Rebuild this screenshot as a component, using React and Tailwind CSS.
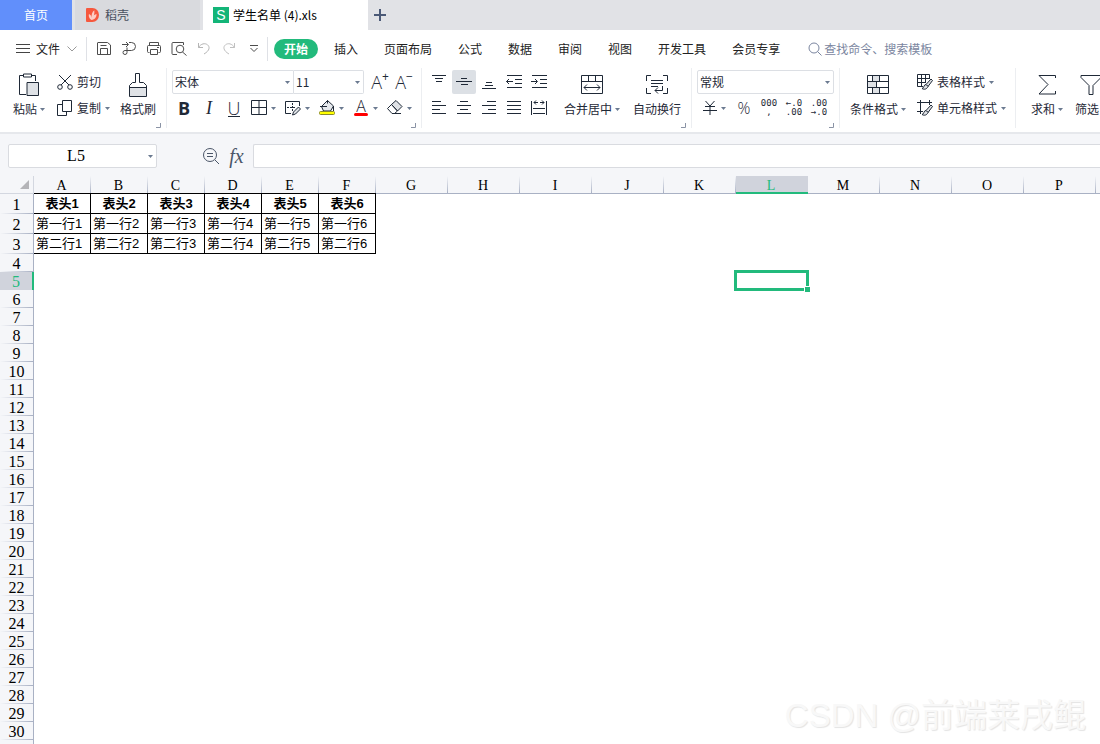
import React, { useState } from "react";
import clsx from "clsx";
import { twMerge } from "tailwind-merge";

/* ── Sheet data ── */
const COLUMNS = "ABCDEFGHIJKLMNOPQ".split("");
const ROW_COUNT = 31;
const DATA_COLS = 6;

const sheet = [
  ["表头1", "表头2", "表头3", "表头4", "表头5", "表头6"],
  ["第一行1", "第一行2", "第一行3", "第一行4", "第一行5", "第一行6"],
  ["第二行1", "第二行2", "第二行3", "第二行4", "第二行5", "第二行6"],
];

const menus = ["插入", "页面布局", "公式", "数据", "审阅", "视图", "开发工具", "会员专享"];

/* ── Shared bits ── */
const Icon = ({ w = 16, h = 16, className, children }) => (
  <svg
    width={w}
    height={h}
    viewBox={`0 0 ${w} ${h}`}
    fill="none"
    stroke="currentColor"
    strokeWidth="1"
    className={clsx("shrink-0", className)}
    aria-hidden="true"
  >
    {children}
  </svg>
);

const Caret = ({ className }) => (
  <svg width="5" height="3" viewBox="0 0 5 3" className={clsx("shrink-0 text-[#6b7a90]", className)} aria-hidden="true">
    <path d="M0 0h5L2.5 3z" fill="currentColor" />
  </svg>
);

const ToolButton = ({ label, caret, active, className, children }) => (
  <button
    type="button"
    aria-label={label}
    className={twMerge(
      "flex h-6 shrink-0 items-center rounded-xs",
      caret ? "w-[34px] gap-1 pl-px" : "w-6 justify-center",
      active && "bg-[#dce0e5]",
      className
    )}
  >
    {children}
    {caret && <Caret />}
  </button>
);

/* icon above, label below */
const BigButton = ({ label, caret, className, children }) => (
  <button type="button" className={clsx("flex shrink-0 flex-col items-center self-start", className)}>
    <span className="flex h-[30px] items-center">{children}</span>
    <span className="flex h-[18px] items-center gap-[3px] whitespace-nowrap">
      {label}
      {caret && <Caret />}
    </span>
  </button>
);

const TextButton = ({ label, caret, children }) => (
  <button type="button" className="flex h-6 items-center gap-1 whitespace-nowrap">
    {children}
    {label}
    {caret && <Caret />}
  </button>
);

const Select = ({ label, value, className }) => (
  <div className={clsx("relative h-6 shrink-0", className)}>
    <select aria-label={label} className="h-full w-full appearance-none bg-transparent pl-0.5 outline-none">
      <option>{value}</option>
    </select>
    <Caret className="pointer-events-none absolute right-[3px] top-[10px]" />
  </div>
);

const Group = ({ launcher, className, children }) => (
  <div className={clsx("relative flex h-[60px] shrink-0 border-r border-[#eceef1]", className)}>
    {children}
    {launcher && (
      <Icon w={5} h={5} className="absolute bottom-0 right-[5px] text-[#8a93a5]">
        <path d="M4.5 0v4.500H0" />
      </Icon>
    )}
  </div>
);

const Brush = () => (
  <>
    <path d="M9 10.500l5-5.500 1.500 1.500-4.500 6z" fill="#dfe2e6" />
    <path d="M9 10.500c-2.500 0-1.500 3.500-4 4 2.500 1.500 5 .5 6-2z" fill="#dfe2e6" />
  </>
);

/* ── Top bars ── */
const TabBar = () => (
  <nav className="flex h-[30px] shrink-0 bg-[#e1e2e6]">
    <button type="button" className="w-[72px] bg-[#618ffb] text-white">首页</button>
    <button type="button" className="ml-[3px] flex w-[125px] items-center gap-[5px] bg-[#d9dade] pl-[11px] text-[#4a5160]">
      <svg width="14" height="14" viewBox="0 0 14 14" aria-hidden="true">
        <path d="M1 0h5.500a6.500 7 0 0 1 0 14H1a1 1 0 0 1-1-1V1a1 1 0 0 1 1-1z" fill="#f6583e" />
        <path d="M5.500 12C2.500 10 2.600 7.500 3 6c1.600.8 2.500 2.200 2.700 4C5.200 7 6 4 8.300 2.200c.3 3-.2 5-1.300 7 .5-1.700 1.700-2.900 3.500-3.200C10.700 9 9 11.500 5.500 12z" fill="#fff" fillOpacity=".7" />
      </svg>
      稻壳
    </button>
    <button type="button" className="ml-[3px] flex w-[165px] items-center gap-1 bg-white pl-[10px] text-black">
      <span className="flex size-4 items-center justify-center bg-[#13b578] font-['Liberation_Sans'] text-sm text-white">S</span>
      学生名单 (4).xls
    </button>
    <button type="button" aria-label="新建标签" className="flex w-6 items-center justify-center text-[#4a5876]">
      <Icon w={12} h={12}>
        <path d="M6 0v12M0 6h12" strokeWidth="2" />
      </Icon>
    </button>
  </nav>
);

const MenuBar = () => (
  <div className="flex h-[38px] shrink-0 items-center whitespace-nowrap">
    <button type="button" className="ml-4 flex items-center gap-[6px]">
      <Icon w={14} h={10} className="text-[#444]">
        <path d="M0 .5h14M0 4.500h14M0 8.500h14" />
      </Icon>
      文件
      <Icon w={12} h={6} className="text-[#999]">
        <path d="M1.500.5L6 5l4.500-4.500" />
      </Icon>
    </button>
    <div className="ml-2 h-6 w-px bg-[#dfe1e6]" />
    <div className="ml-[5px] flex gap-px text-[#4d4d4d]">
      <ToolButton label="保存">
        <Icon>
          <path d="M2 1.500h9.500L14.500 4v9.500h-13v-12M4.500 13.500v-6h7v6M4.500 4.500h6" />
        </Icon>
      </ToolButton>
      <ToolButton label="输出">
        <Icon>
          <path d="M1 3.500h6M5 1l2.500 2.500L5 6M8 1.500h2.500a4 4 0 0 1 0 8H4a2 2 0 1 0 2 2V6.500" />
        </Icon>
      </ToolButton>
      <ToolButton label="打印">
        <Icon>
          <path d="M3.500 4.500v-3h9v3M3.500 11.500h-1a1 1 0 0 1-1-1v-5a1 1 0 0 1 1-1h11a1 1 0 0 1 1 1v5a1 1 0 0 1-1 1h-1M4.500 8.500h7v5h-7zM11 6.500h2" />
        </Icon>
      </ToolButton>
      <ToolButton label="打印预览">
        <Icon>
          <path d="M6 13.500H2a1 1 0 0 1-1-1v-10a1 1 0 0 1 1-1h10.500V4M11.500 11l4 3.500" />
          <circle cx="9" cy="8" r="3.800" />
        </Icon>
      </ToolButton>
      <ToolButton label="撤销" className="text-[#b5b5b5]">
        <Icon>
          <path d="M2.500 2v4.500H7M2.500 6.500C5 2.500 9 1.800 11.500 3.800S14 9.500 8 13" />
        </Icon>
      </ToolButton>
      <ToolButton label="恢复" className="text-[#c0c0c0]">
        <Icon>
          <path d="M13.500 2v4.500H9M13.500 6.500C11 2.500 7 1.800 4.500 3.800S2 9.500 8 13" />
        </Icon>
      </ToolButton>
      <ToolButton label="更多">
        <Icon w={8} h={8}>
          <path d="M0 .5h8M.5 3L4 6.500 7.500 3" />
        </Icon>
      </ToolButton>
    </div>
    <div className="ml-px h-6 w-px bg-[#dfe1e6]" />
    <button type="button" className="ml-[6px] h-5 w-11 rounded-full bg-[#22ba7c] font-bold text-white">开始</button>
    <div className="ml-4 flex gap-[26px]">
      {menus.map((m) => (
        <button key={m} type="button">{m}</button>
      ))}
    </div>
    <label className="ml-7 flex items-center gap-[2px] text-[#7b86a0]">
      <Icon w={14} h={14}>
        <circle cx="6" cy="6" r="5" />
        <path d="M9.500 9.500l4 4" />
      </Icon>
      <input type="search" placeholder="查找命令、搜索模板" className="w-32 bg-transparent outline-none placeholder:text-[#7b86a0]" />
    </label>
  </div>
);

const Ribbon = () => (
  <div className="flex h-16 shrink-0 overflow-hidden text-[#1f2937]">
    {/* clipboard */}
    <Group launcher className="w-[167px] pl-[13px] pt-0.5">
      <BigButton label="粘贴" caret>
        <Icon w={22} h={24}>
          <path d="M6 2.500H1.500v19H8M13 2.500h4.500V8M5.500 1h8v3h-8z" />
          <path d="M9 9.500h11.500v13H9z" fill="#dfe2e6" />
        </Icon>
      </BigButton>
      <div className="ml-3 flex flex-col gap-0.5">
        <TextButton label="剪切">
          <Icon w={16} h={16}>
            <path d="M2 1l10 10M14 1L4 11" />
            <circle cx="3" cy="13" r="2.300" />
            <circle cx="13" cy="13" r="2.300" />
          </Icon>
        </TextButton>
        <TextButton label="复制" caret>
          <Icon w={16} h={16}>
            <path d="M5.500.5h9v11h-9zM5.500 4.500h-5v11h9v-4" />
          </Icon>
        </TextButton>
      </div>
      <BigButton label="格式刷" className="ml-[10px]">
        <Icon w={18} h={26}>
          <path d="M1 16h16v8.500H1z" fill="#dfe2e6" stroke="none" />
          <path d="M6.500 1.500h4v9h4l3 3v11H.5v-11l3-3h3zM.5 15.500h17" />
        </Icon>
      </BigButton>
    </Group>

    {/* font */}
    <Group launcher className="w-[255px] flex-col gap-0.5 pl-[5px] pt-0.5">
      <div className="flex">
        <Select label="字体" value="宋体" className="w-[122px] rounded-l-xs border border-[#dcdfe4]" />
        <Select label="字号" value="11" className="w-[70px] rounded-r-xs border border-l-0 border-[#dcdfe4]" />
        <div className="ml-1 flex font-['Open_Sans']">
          <ToolButton label="增大字号">
            <span className="text-lg font-light leading-6">A</span>
            <span className="self-start text-xs leading-[14px]">+</span>
          </ToolButton>
          <ToolButton label="减小字号">
            <span className="text-lg font-light leading-6">A</span>
            <span className="self-start text-xs leading-[14px]">−</span>
          </ToolButton>
        </div>
      </div>
      <div className="flex gap-px">
        <ToolButton label="加粗">
          <span className="font-['Open_Sans'] text-lg font-bold leading-6">B</span>
        </ToolButton>
        <ToolButton label="倾斜">
          <span className="font-['Liberation_Serif'] text-lg italic leading-6">I</span>
        </ToolButton>
        <ToolButton label="下划线">
          <span className="h-[17px] border-b border-current font-['Open_Sans'] text-lg font-light leading-4">U</span>
        </ToolButton>
        <div className="ml-[3px] flex">
          <ToolButton label="边框" caret>
            <Icon>
              <path d="M.5.5h15v14H.5zM8 .5v14M.5 7.500h15" />
            </Icon>
          </ToolButton>
          <ToolButton label="绘制边框" caret>
            <Icon>
              <path d="M6 13.500H.5v-12h14V6" />
              <path d="M7.500 3v9M2 7.500h9" strokeDasharray="2 1" />
              <path d="M7.500 15l1-3 5-5 2 2-5 5z" fill="#dfe2e6" />
            </Icon>
          </ToolButton>
          <ToolButton label="填充颜色" caret>
            <Icon>
              <path d="M2.500 6.500l6-6 6 5.500-3 5h-7z" fill="#e6e9ed" />
              <path d="M1 6.500h7M8.500.5v3M14.500 6v5" />
              <rect x=".5" y="11.500" width="15" height="3" rx="1" fill="#ff0" stroke="#8a8a2a" />
            </Icon>
          </ToolButton>
          <ToolButton label="字体颜色" caret>
            <span className="flex w-4 flex-col items-center">
              <span className="h-[13px] font-['Open_Sans'] text-base font-light leading-3">A</span>
              <span className="h-[3px] w-[14px] rounded-full bg-[#f00]" />
            </span>
          </ToolButton>
          <ToolButton label="清除" caret>
            <Icon>
              <path d="M4.500 4.500L9 .5l6 6-4.500 4.500z" fill="#dfe2e6" />
              <path d="M4.500 4.500L.5 8.500l4.500 5h2.500l3-2.500zM5 13.500h9" />
            </Icon>
          </ToolButton>
        </div>
      </div>
    </Group>

    {/* alignment */}
    <Group launcher className="w-[270px] pl-[5px] pt-0.5">
      <div className="grid grid-cols-5 content-start gap-x-px gap-y-0.5">
        <ToolButton label="顶端对齐">
          <Icon className="-scale-y-100">
            <path d="M1 14.500h14M4 11.500h8M5 8.500h6" />
          </Icon>
        </ToolButton>
        <ToolButton label="垂直居中" active>
          <Icon>
            <path d="M5 4.500h6M0 7.500h16M5 10.500h7" />
          </Icon>
        </ToolButton>
        <ToolButton label="底端对齐">
          <Icon>
            <path d="M1 14.500h14M4 11.500h8M5 8.500h6" />
          </Icon>
        </ToolButton>
        <ToolButton label="减少缩进">
          <Icon>
            <path d="M1 1.500h15M9 5.500h7M9 9.500h7M1 13.500h15M.5 7.500H7M3 5L.5 7.500 3 10" />
          </Icon>
        </ToolButton>
        <ToolButton label="增加缩进">
          <Icon>
            <path d="M1 1.500h15M9 5.500h7M9 9.500h7M1 13.500h15M0 7.500h6M4 5l2.500 2.500L4 10" />
          </Icon>
        </ToolButton>
        <ToolButton label="左对齐">
          <Icon>
            <path d="M1 1.500h9M1 5.500h14M1 9.500h8M1 13.500h14" />
          </Icon>
        </ToolButton>
        <ToolButton label="水平居中">
          <Icon>
            <path d="M4 1.500h8M1 5.500h14M4 9.500h8M1 13.500h14" />
          </Icon>
        </ToolButton>
        <ToolButton label="右对齐">
          <Icon>
            <path d="M6 1.500h9M1 5.500h14M7 9.500h8M1 13.500h14" />
          </Icon>
        </ToolButton>
        <ToolButton label="两端对齐">
          <Icon>
            <path d="M1 1.500h14M1 5.500h14M1 9.500h14M1 13.500h14" />
          </Icon>
        </ToolButton>
        <ToolButton label="分散对齐">
          <Icon>
            <path d="M.5 1v14M15.500 1v14M3 2.500h4M5 .5L3 2.500l2 2M9 2.500h4M11 .5l2 2-2 2M2 8.500h12M2 13.500h12" />
          </Icon>
        </ToolButton>
      </div>
      <BigButton label="合并居中" caret className="ml-[13px]">
        <Icon w={22} h={20}>
          <path d="M.5.5h21v18H.5zM.5 6.500h21M7.500.5v6M14.500.5v6M3 12.500h16M6 9.500l-3 3 3 3M16 9.500l3 3-3 3" />
        </Icon>
      </BigButton>
      <BigButton label="自动换行" className="ml-[13px]">
        <Icon w={22} h={20}>
          <path d="M5 .5H.5V6M17 .5h4.500V6M5 18.500H.5V13M17 18.500h4.500V13M5 5.500h12M5 8.500h12M5 11.500h7M16.500 11v4.500H9M12 12.500l-3 3 3 3" />
        </Icon>
      </BigButton>
    </Group>

    {/* number */}
    <Group launcher className="w-[148px] flex-col gap-0.5 pl-[5px] pt-0.5">
      <Select label="数字格式" value="常规" className="w-[137px] rounded-xs border border-[#dcdfe4]" />
      <div className="ml-[5px] flex gap-px">
        <ToolButton label="货币" caret className="w-[29px]">
          <Icon w={14} h={14}>
            <path d="M2.500 0L7 5l4.500-5M2 5.500h10M0 9.500h14M7 5v9" />
          </Icon>
        </ToolButton>
        <ToolButton label="百分比">
          <span className="font-['Open_Sans'] text-base font-light leading-6">%</span>
        </ToolButton>
        <ToolButton label="千位分隔" className="flex-col font-['DejaVu_Sans_Mono'] text-[9px] leading-[9px]">
          <span>000</span>
          <span>,</span>
        </ToolButton>
        <ToolButton label="增加小数位" className="flex-col font-['DejaVu_Sans_Mono'] text-[9px] leading-[9px]">
          <span>←.0</span>
          <span>.00</span>
        </ToolButton>
        <ToolButton label="减少小数位" className="flex-col font-['DejaVu_Sans_Mono'] text-[9px] leading-[9px]">
          <span>.00</span>
          <span>→.0</span>
        </ToolButton>
      </div>
    </Group>

    {/* styles */}
    <Group className="w-44 pl-[10px] pt-0.5">
      <BigButton label="条件格式" caret>
        <Icon w={22} h={20}>
          <path d="M5 1h7v5H5zM1 7h8v5H1zM5 13h7v6H5z" fill="#dfe2e6" stroke="none" />
          <path d="M.5.5h21v18H.5zM.5 6.500h21M.5 12.500h21M5.500.5v6M12.500.5v6M9.500 6.500v6M5.500 12.500v6M12.500 12.500v6" />
        </Icon>
      </BigButton>
      <div className="ml-[11px] flex flex-col gap-0.5">
        <TextButton label="表格样式" caret>
          <Icon>
            <path d="M6 12.500H.5V.5h12V5M.5 4.500h12M.5 8.500H9M4.500.5v12M8.500.5v8" />
            <Brush />
          </Icon>
        </TextButton>
        <TextButton label="单元格样式" caret>
          <Icon>
            <path d="M3.500 0v14M0 2.500h15M0 11.500h6M12.500 0v5" />
            <Brush />
          </Icon>
        </TextButton>
      </div>
    </Group>

    {/* editing */}
    <div className="flex shrink-0 pl-[15px] pt-0.5">
      <BigButton label="求和" caret>
        <Icon w={18} h={20}>
          <path d="M17.500 3V.5H1l9 9-9 9.500h16.500V16" />
        </Icon>
      </BigButton>
      <BigButton label="筛选" caret className="ml-3">
        <Icon w={22} h={20}>
          <path d="M1 .5h20v2l-8 8v9H9v-9l-8-8z" />
        </Icon>
      </BigButton>
    </div>
  </div>
);

const FormulaBar = ({ cell }) => (
  <div className="flex h-11 shrink-0 items-center border-t-2 border-[#e6e8ec] bg-[#f5f6f9] pb-px pl-2 pt-[3px]">
    <div className="relative h-6 w-[149px] shrink-0 rounded-xs border border-[#d9dbe0] bg-white">
      <input
        aria-label="名称框"
        readOnly
        value={cell}
        className="h-full w-[134px] bg-transparent text-center font-['Liberation_Serif'] text-base text-black outline-none"
      />
      <Caret className="pointer-events-none absolute right-[3px] top-[10px]" />
    </div>
    <button type="button" aria-label="查找" className="ml-[45px] text-[#4a5568]">
      <Icon w={18} h={18}>
        <circle cx="8" cy="8" r="6.500" />
        <path d="M13 13l4 4M5 6.500h6M5 9.500h6" />
      </Icon>
    </button>
    <button type="button" aria-label="插入函数" className="w-[33px] font-['Liberation_Serif'] text-xl italic leading-5 text-[#4a5568]">
      fx
    </button>
    <input aria-label="编辑栏" className="h-6 min-w-0 flex-1 rounded-l-xs border border-r-0 border-[#d9dbe0] bg-white px-1 outline-none" />
  </div>
);

/* ── Grid ── */
const Grid = ({ active, onSelect }) => (
  <main className="min-h-0 flex-1 overflow-hidden">
    <table className="w-max table-fixed border-separate border-spacing-0 font-['Liberation_Serif'] text-black">
      <colgroup>
        <col className="w-[34px]" />
        {COLUMNS.map((c, i) => (
          <col key={c} className={i < DATA_COLS ? "w-[57px]" : "w-[72px]"} />
        ))}
      </colgroup>
      <thead>
        <tr className="h-[18px] bg-[#f5f6f9]">
          <th className="border-b border-r border-[#d3d7e0] p-0">
            <Icon w={10} h={10} className="ml-5">
              <path d="M9 0v9H0z" fill="#b4b4b8" stroke="none" />
            </Icon>
          </th>
          {COLUMNS.map((c, i) => (
            <th
              key={c}
              scope="col"
              className={clsx(
                "p-0 pr-0.5 pt-[3px] text-sm font-normal leading-3",
                i === active.col
                  ? "border-b-2 border-[#22ba7c] bg-[#d0d3dc] text-[#22ba7c]"
                  : "border-b bg-[linear-gradient(to_bottom,#f5f6f9,#a9b1c4)] bg-[length:1px_100%] bg-right bg-no-repeat",
                i !== active.col && (i < DATA_COLS ? "border-black" : "border-[#a9b1c4]")
              )}
            >
              {c}
            </th>
          ))}
        </tr>
      </thead>
      <tbody>
        {Array.from({ length: ROW_COUNT }, (_, r) => (
          <tr key={r} className={r < sheet.length ? "h-5" : "h-[18px]"}>
            <th
              scope="row"
              className={clsx(
                "p-0 pt-0.5 text-base font-normal leading-4",
                r === active.row
                  ? "border-r-2 border-[#22ba7c] bg-[#d0d3dc] text-[#22ba7c]"
                  : "border-r border-[#a9b1c4] bg-[#f5f6f9] bg-[linear-gradient(to_right,#f5f6f9,#a9b1c4)] bg-[length:100%_1px] bg-bottom bg-no-repeat"
              )}
            >
              {r + 1}
            </th>
            {COLUMNS.map((c, i) => {
              const filled = r < sheet.length && i < DATA_COLS;
              const selected = r === active.row && i === active.col;
              return (
                <td
                  key={c}
                  onClick={() => onSelect({ row: r, col: i })}
                  className={clsx(
                    "p-0",
                    filled && "whitespace-nowrap border-b border-r border-black font-['Liberation_Sans','Noto_Sans_CJK_SC',sans-serif] text-[13px] leading-4",
                    filled && (r === 0 ? "text-center font-bold" : "pl-0.5"),
                    selected && "relative"
                  )}
                >
                  {filled && sheet[r][i]}
                  {selected && (
                    <div className="absolute -bottom-px -left-0.5 -right-px -top-0.5 border-3 border-[#22ba7c]">
                      <div className="absolute -bottom-[5px] -right-[5px] size-[7px] border border-white bg-[#22ba7c]" />
                    </div>
                  )}
                </td>
              );
            })}
          </tr>
        ))}
      </tbody>
    </table>
  </main>
);

const App = () => {
  const [active, setActive] = useState({ row: 4, col: 11 });

  return (
    <div className="relative flex h-screen flex-col overflow-hidden bg-white font-['Noto_Sans_CJK_SC',sans-serif] text-xs text-[#222]">
      <TabBar />
      <MenuBar />
      <Ribbon />
      <FormulaBar cell={`${COLUMNS[active.col]}${active.row + 1}`} />
      <Grid active={active} onSelect={setActive} />
      <p className="pointer-events-none absolute bottom-1 right-[14px] font-['Liberation_Sans','Noto_Sans_CJK_SC',sans-serif] text-[33px] leading-12 text-[#f8f8f8] [text-shadow:1px_1px_1px_#e4e4e4]">
        CSDN @前端莱戌鲲
      </p>
    </div>
  );
};

export default App;
